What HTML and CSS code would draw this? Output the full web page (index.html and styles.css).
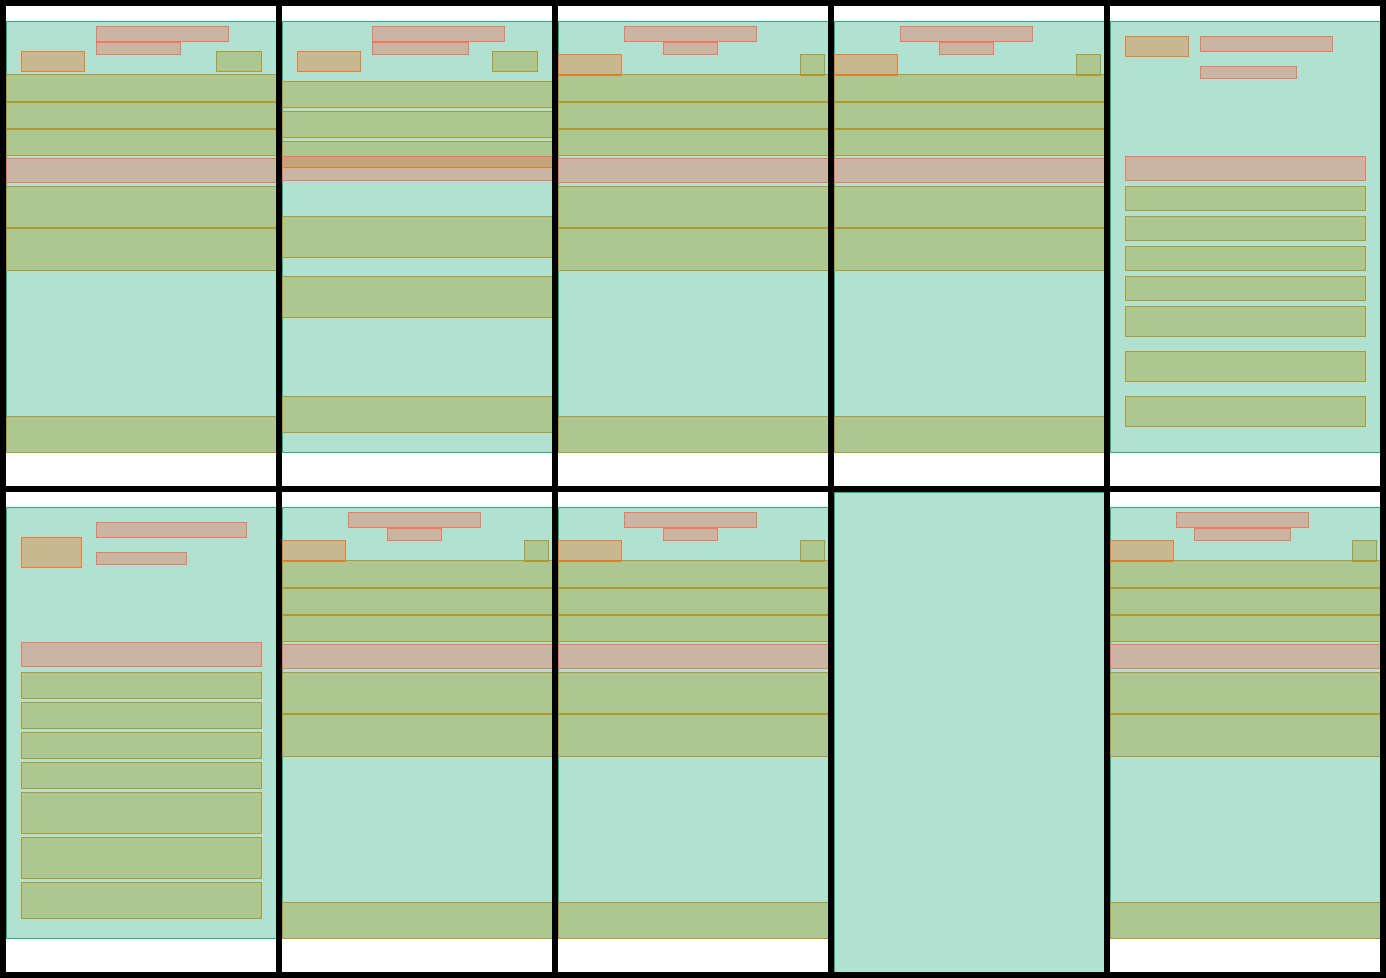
FILE: index.html
```html
<!DOCTYPE html>
<html lang="en">
<head>
<meta charset="utf-8">
<title>Screen layouts</title>
<link rel="stylesheet" href="styles.css">
</head>
<body>
<main class="board">
  <section class="card">
    <div class="screen">
      <div class="header">
        <div class="box back"></div>
        <div class="titles"><div class="box title"></div><div class="box subtitle sub-85"></div></div>
        <div class="box action"></div>
      </div>
      <div class="box row h28"></div>
      <div class="box row h27"></div>
      <div class="box row h27"></div>
      <div class="box row label"></div>
      <div class="box row h42"></div>
      <div class="box row h43"></div>
      <div class="box row footer"></div>
    </div>
  </section>
  <section class="card">
    <div class="screen spaced">
      <div class="header">
        <div class="box back"></div>
        <div class="titles"><div class="box title"></div><div class="box subtitle sub-97"></div></div>
        <div class="box action"></div>
      </div>
      <div class="group">
        <div class="box row h27"></div>
        <div class="box row h27"></div>
        <div class="box row h27"></div>
      </div>
      <div class="box row label"></div>
      <div class="group loose">
        <div class="box row h42"></div>
        <div class="box row h42"></div>
      </div>
      <div class="box row footer"></div>
    </div>
  </section>
  <section class="card">
    <div class="screen">
      <div class="header centered">
        <div class="box back"></div>
        <div class="titles"><div class="box title"></div><div class="box subtitle sub-55"></div></div>
        <div class="box action"></div>
      </div>
      <div class="box row h28"></div>
      <div class="box row h27"></div>
      <div class="box row h27"></div>
      <div class="box row label"></div>
      <div class="box row h42"></div>
      <div class="box row h43"></div>
      <div class="box row footer"></div>
    </div>
  </section>
  <section class="card">
    <div class="screen">
      <div class="header centered">
        <div class="box back"></div>
        <div class="titles"><div class="box title"></div><div class="box subtitle sub-55"></div></div>
        <div class="box action"></div>
      </div>
      <div class="box row h28"></div>
      <div class="box row h27"></div>
      <div class="box row h27"></div>
      <div class="box row label"></div>
      <div class="box row h42"></div>
      <div class="box row h43"></div>
      <div class="box row footer"></div>
    </div>
  </section>
  <section class="card">
    <div class="screen inset airy">
      <div class="header tall">
        <div class="box back"></div>
        <div class="titles"><div class="box title"></div><div class="box subtitle sub-97"></div></div>
      </div>
      <div class="group">
        <div class="box row label"></div>
        <div class="box row h25"></div>
        <div class="box row h25"></div>
        <div class="box row h25"></div>
        <div class="box row h25"></div>
      </div>
      <div class="group loose">
        <div class="box row h31"></div>
        <div class="box row h31"></div>
        <div class="box row h31"></div>
      </div>
    </div>
  </section>
  <section class="card">
    <div class="screen inset">
      <div class="header tall">
        <div class="box back large"></div>
        <div class="titles"><div class="box title wide"></div><div class="box subtitle sub-91"></div></div>
      </div>
      <div class="box row label"></div>
      <div class="group">
        <div class="box row h27"></div>
        <div class="box row h27"></div>
        <div class="box row h27"></div>
        <div class="box row h27"></div>
        <div class="box row h42"></div>
        <div class="box row h42"></div>
        <div class="box row h37"></div>
      </div>
    </div>
  </section>
  <section class="card">
    <div class="screen">
      <div class="header centered">
        <div class="box back"></div>
        <div class="titles"><div class="box title"></div><div class="box subtitle sub-55"></div></div>
        <div class="box action"></div>
      </div>
      <div class="box row h28"></div>
      <div class="box row h27"></div>
      <div class="box row h27"></div>
      <div class="box row label"></div>
      <div class="box row h42"></div>
      <div class="box row h43"></div>
      <div class="box row footer"></div>
    </div>
  </section>
  <section class="card">
    <div class="screen">
      <div class="header centered">
        <div class="box back"></div>
        <div class="titles"><div class="box title"></div><div class="box subtitle sub-55"></div></div>
        <div class="box action"></div>
      </div>
      <div class="box row h28"></div>
      <div class="box row h27"></div>
      <div class="box row h27"></div>
      <div class="box row label"></div>
      <div class="box row h42"></div>
      <div class="box row h43"></div>
      <div class="box row footer"></div>
    </div>
  </section>
  <section class="card full">
    <div class="screen"></div>
  </section>
  <section class="card">
    <div class="screen">
      <div class="header centered">
        <div class="box back"></div>
        <div class="titles"><div class="box title"></div><div class="box subtitle sub-97"></div></div>
        <div class="box action"></div>
      </div>
      <div class="box row h28"></div>
      <div class="box row h27"></div>
      <div class="box row h27"></div>
      <div class="box row label"></div>
      <div class="box row h42"></div>
      <div class="box row h43"></div>
      <div class="box row footer"></div>
    </div>
  </section>
</main>
</body>
</html>
```
FILE: styles.css
```css
:root {
  --mint: #b1e1d1;
  --green: #2bae85;
  --olive: #b09a2d;
  --olive-fill: rgba(171, 143, 18, 0.33);
  --coral: #fa7460;
  --coral-fill: rgba(255, 92, 70, 0.33);
  --orange: #ee7d31;
  --orange-fill: rgba(247, 101, 15, 0.33);
}

* {
  box-sizing: border-box;
}

body {
  margin: 0;
  background: #000;
}

.board {
  display: grid;
  grid-template-columns: repeat(5, minmax(0, 1fr));
  grid-auto-rows: 1fr;
  gap: 6px;
  min-height: 100vh;
  padding: 6px;
}

.card {
  padding: 15px 0 33px;
  background: #fff;
}

.screen {
  display: flex;
  flex-direction: column;
  height: 100%;
  background: var(--mint);
  box-shadow: inset 1px 1px 0 var(--green), inset 0 -1px 0 var(--green);
}

.full {
  padding: 0;
}

.full .screen {
  box-shadow: inset 1px 1px 0 var(--green);
}

.box {
  flex-shrink: 0;
  border: 1px solid var(--olive);
  background: var(--olive-fill);
}

/* Headers */

.header {
  display: flex;
  flex-shrink: 0;
  align-items: flex-end;
  height: 53px;
  padding: 5px 14px 2px 15px;
}

.back {
  width: 64px;
  height: 21px;
  border-color: var(--orange);
  background: var(--orange-fill);
}

.action {
  width: 46px;
  height: 21px;
}

/* A long title may run on above the action */
.titles {
  display: flex;
  flex: 1;
  flex-direction: column;
  align-self: flex-start;
  min-width: 0;
  margin-left: 11px;
}

.title,
.subtitle {
  border-color: var(--coral);
  background: var(--coral-fill);
}

.title {
  width: 133px;
  height: 16px;
}

.title.wide {
  width: 151px;
}

.subtitle {
  height: 13px;
}

.sub-55 { width: 55px; }
.sub-85 { width: 85px; }
.sub-91 { width: 91px; }
.sub-97 { width: 97px; }

/* The buttons of a centred header reach over the first row */
.centered {
  position: relative;
  z-index: 1;
  display: grid;
  grid-template-areas: "bar";
  height: 55px;
  margin-bottom: -2px;
  padding: 5px 3px 0 0;
}

.centered > * {
  grid-area: bar;
}

.centered .back,
.centered .action {
  align-self: end;
  height: 22px;
}

.centered .action {
  justify-self: end;
  width: 25px;
}

.centered .titles {
  align-items: center;
  margin: 0 2px 0 0;
}

.tall {
  align-items: flex-start;
  height: 135px;
  padding: 15px 0 0;
}

.tall .titles {
  gap: 14px;
}

.tall .large {
  width: 61px;
  height: 31px;
  margin-top: 15px;
}

.tall .large + .titles {
  margin-left: 14px;
}

/* Rows */

.row {
  border-right: 0;
}

.inset .row {
  border-right: 1px solid var(--olive);
}

.h25 { height: 25px; }
.h27 { height: 27px; }
.h28 { height: 28px; }
.h31 { height: 31px; }
.h37 { height: 37px; }
.h42 { height: 42px; }
.h43 { height: 43px; }

.row.label {
  height: 25px;
  margin: 2px 0 3px;
  border-color: var(--coral);
  background: var(--coral-fill);
}

.footer {
  height: 37px;
  margin-top: auto;
}

.group {
  display: flex;
  flex-direction: column;
  gap: 3px;
}

/* Rows with space between them; the label reaches over the third row */
.spaced {
  padding-bottom: 20px;
}

.spaced .group {
  margin-top: 7px;
}

.spaced .label {
  margin: -12px 0 28px;
}

.spaced .loose {
  gap: 18px;
}

/* Rows inset from the screen's sides */
.inset {
  padding: 0 14px 0 15px;
}

.inset .label {
  margin: 0 0 5px;
}

.airy .group {
  gap: 5px;
}

.airy .label {
  margin: 0;
}

.airy .loose {
  gap: 14px;
  margin-top: 5px;
}
```
